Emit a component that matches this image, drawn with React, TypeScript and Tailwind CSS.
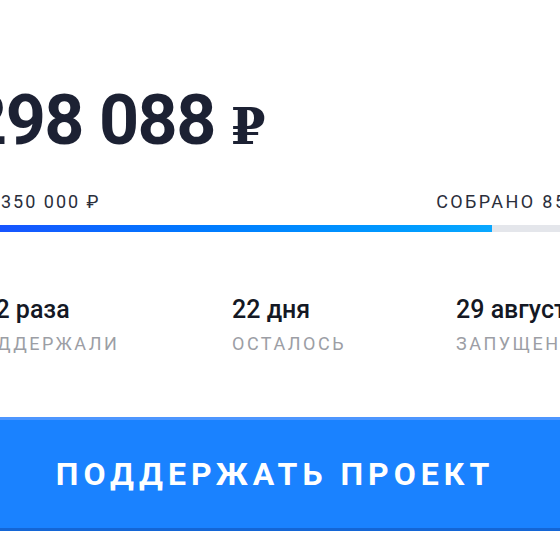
const raised = 298088;
const goal = 350000;
const percent = Math.floor((raised / goal) * 100);

const stats = [
  { value: '142 раза', label: 'Поддержали' },
  { value: '22 дня', label: 'Осталось' },
  { value: '29 августа', label: 'Запущен' },
];

export default function App() {
  return (
    <div className="h-[560px] w-[560px] overflow-hidden bg-white font-['Roboto',sans-serif]">
      <div className="ml-[-33px] w-[616px] pt-[85px]">
        <h1 className="text-[70px] font-bold leading-none tracking-[-1.5px] text-[#1c2133]">
          298 088 <span className="font-['DejaVu_Serif',serif] text-[50px]">₽</span>
        </h1>

        <div className="mt-[38px] flex items-baseline justify-between text-[18px] leading-none tracking-[2px] text-[#2a2e3b] uppercase">
          <span>из 350 000 ₽</span>
          <span className="tracking-[2.4px]">Собрано {percent}%</span>
        </div>

        <div className="mt-[14px] h-[7px] w-full bg-[#e4e6eb]">
          <div
            className="h-full bg-gradient-to-r from-[#1a4dff] to-[#0aa8ff]"
            style={{ width: `${(raised / goal) * 100}%` }}
          />
        </div>

        <div className="mt-[65px] grid grid-cols-[265px_224px_1fr]">
          {stats.map((s) => (
            <div key={s.label} className="flex flex-col">
              <span className="text-[25px] font-medium leading-none text-[#141824]">{s.value}</span>
              <span className="mt-[13px] text-[18px] leading-none tracking-[2.5px] text-[#9c9ea5] uppercase">
                {s.label}
              </span>
            </div>
          ))}
        </div>

        <button className="mt-[64px] flex h-[114px] w-full items-center justify-center border-t-[3px] border-b-[3px] border-t-[#4d96ff] border-b-[#1466d6] bg-[#1a82ff] text-[32px] font-bold tracking-[5px] text-white uppercase">
          Поддержать проект
        </button>
      </div>
    </div>
  );
}
